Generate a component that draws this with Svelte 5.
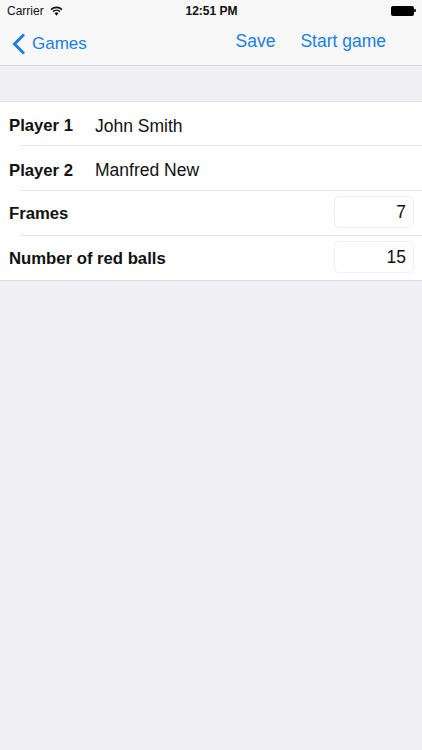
<script>
	const players = [
		{ label: 'Player 1', name: 'John Smith' },
		{ label: 'Player 2', name: 'Manfred New' }
	];
	const numbers = [
		{ label: 'Frames', value: 7 },
		{ label: 'Number of red balls', value: 15 }
	];
</script>

<div class="screen">
	<header>
		<div class="status">
			<div class="carrier">
				Carrier
				<svg width="13" height="10" viewBox="0 0 14 11">
					<path d="M1 4 A8.5 8.5 0 0 1 13 4" fill="none" stroke="#111" stroke-width="1.7" />
					<path d="M3.2 6.2 A5.4 5.4 0 0 1 10.8 6.2" fill="none" stroke="#111" stroke-width="1.7" />
					<path d="M7 10.6 L4.9 8 A3 3 0 0 1 9.1 8 Z" fill="#111" />
				</svg>
			</div>
			<div class="time">12:51 PM</div>
			<div class="battery">
				<span class="cell"></span>
				<span class="tip"></span>
			</div>
		</div>
		<nav>
			<a class="back" href="#games">
				<svg width="14" height="22" viewBox="0 0 14 22">
					<path d="M12 1.5 L2.5 11 L12 20.5" fill="none" stroke="#1a7ee8" stroke-width="3" />
				</svg>
				Games
			</a>
			<div class="actions">
				<a href="#save">Save</a>
				<a href="#start">Start game</a>
			</div>
		</nav>
	</header>

	<section class="list">
		{#each players as player}
			<div class="row player-row">
				<span class="label player">{player.label}</span>
				<span class="name">{player.name}</span>
			</div>
		{/each}
		{#each numbers as item}
			<div class="row number-row">
				<span class="label">{item.label}</span>
				<span class="field">{item.value}</span>
			</div>
		{/each}
	</section>
</div>

<style>
	:global(body) {
		background: #efeff4;
	}

	.screen {
		height: 750px;
		background: #efeff4;
		font-family: 'Liberation Sans', Arial, sans-serif;
		color: #111;
		overflow: hidden;
	}

	header {
		background: #f8f8f9;
		border-bottom: 1px solid #d6d6d9;
		height: 66px;
		box-sizing: border-box;
	}

	.status {
		display: grid;
		grid-template-columns: 1fr auto 1fr;
		align-items: center;
		height: 21px;
		padding: 0 6px 0 7px;
		font-size: 12px;
		color: #111;
	}

	.carrier {
		display: flex;
		align-items: center;
		gap: 6px;
	}

	.time {
		font-weight: 700;
	}

	.battery {
		display: flex;
		align-items: center;
		justify-content: flex-end;
	}

	.cell {
		width: 23px;
		height: 10px;
		background: #000;
		border-radius: 2px;
	}

	.tip {
		width: 2px;
		height: 3px;
		background: #333;
	}

	nav {
		display: flex;
		justify-content: space-between;
		align-items: center;
		height: 44px;
		padding: 0 36px 0 12px;
		font-size: 17.5px;
	}

	a {
		color: #1a7ee8;
		text-decoration: none;
	}

	.back {
		display: flex;
		align-items: center;
		gap: 6px;
		padding-top: 1px;
		font-size: 17px;
	}

	.actions {
		display: flex;
		gap: 25px;
		padding-bottom: 4px;
	}

	.list {
		margin-top: 35px;
		background: #fff;
		border-top: 1px solid #e3e3e6;
		border-bottom: 1px solid #dcdce0;
	}

	.row {
		position: relative;
		display: flex;
		align-items: center;
		height: 44px;
		padding: 0 8px 0 9px;
		box-sizing: border-box;
		font-size: 17.5px;
		margin-top: 1px;
	}

	.row:first-child {
		height: 43px;
		margin-top: 0;
	}

	.player-row {
		padding-top: 5px;
	}

	.number-row {
		padding-top: 2px;
	}

	.row + .row::before {
		content: '';
		position: absolute;
		top: -1px;
		left: 20px;
		right: 0;
		height: 1px;
		background: #e6e6e9;
	}

	.label {
		font-weight: 700;
		font-size: 16.7px;
		flex: 1;
	}

	.label.player {
		flex: 0 0 86px;
	}

	.field {
		width: 80px;
		height: 32px;
		margin-top: -4px;
		box-sizing: border-box;
		border: 1px solid #f0f0f2;
		border-radius: 5px;
		text-align: right;
		line-height: 30px;
		padding-right: 7px;
	}
</style>
